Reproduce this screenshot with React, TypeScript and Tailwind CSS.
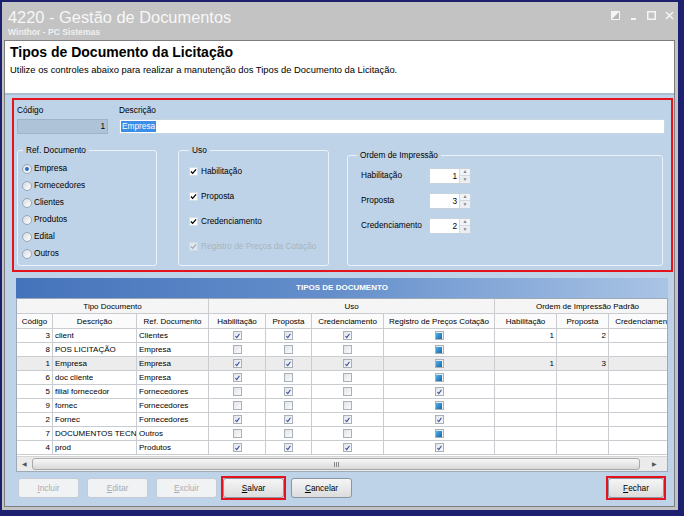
import React from "react";

const F = { fontFamily: '"Liberation Sans", Arial, sans-serif' };

type R = { c: number; d: string; r: string; h: number; p: number; cr: number; rg: number; oh?: string; op?: string; sel?: boolean };

const rows: R[] = [
  { c: 3, d: "client", r: "Clientes", h: 1, p: 1, cr: 1, rg: 2, oh: "1", op: "2" },
  { c: 8, d: "POS LICITAÇÃO", r: "Empresa", h: 0, p: 0, cr: 0, rg: 2 },
  { c: 1, d: "Empresa", r: "Empresa", h: 1, p: 1, cr: 1, rg: 2, oh: "1", op: "3", sel: true },
  { c: 6, d: "doc cliente", r: "Empresa", h: 1, p: 0, cr: 0, rg: 2 },
  { c: 5, d: "filial fornecedor", r: "Fornecedores", h: 0, p: 1, cr: 0, rg: 1 },
  { c: 9, d: "fornec", r: "Fornecedores", h: 0, p: 0, cr: 0, rg: 2 },
  { c: 2, d: "Fornec", r: "Fornecedores", h: 1, p: 1, cr: 1, rg: 1 },
  { c: 7, d: "DOCUMENTOS TECNICOS", r: "Outros", h: 0, p: 0, cr: 0, rg: 2 },
  { c: 4, d: "prod", r: "Produtos", h: 1, p: 1, cr: 1, rg: 1 },
];

function TCheck({ v }: { v: number }) {
  return (
    <span className="w-[9px] h-[9px] border border-[#a9b0b8] bg-gradient-to-br from-[#e2e4e8] to-[#fbfbfb] flex items-center justify-center">
      {v === 1 && (
        <svg viewBox="0 0 9 9" className="w-[8px] h-[8px]">
          <path d="M1.8 4.6 L3.6 6.6 L7 1.8" stroke="#3b4fa8" strokeWidth="1.3" fill="none" />
        </svg>
      )}
      {v === 2 && <span className="w-[6px] h-[6px] bg-gradient-to-br from-[#4fb3e8] to-[#1466a8]" />}
    </span>
  );
}

function Radio({ on, label }: { on?: boolean; label: string }) {
  return (
    <div className="h-[17px] flex items-center gap-[2px]">
      <span className="w-[10px] h-[10px] rounded-full border border-[#9aa6b3] bg-gradient-to-br from-[#d5dbe2] to-white flex items-center justify-center">
        {on && <span className="w-[4px] h-[4px] rounded-full bg-[#2f6fc4]" />}
      </span>
      <span>{label}</span>
    </div>
  );
}

function FCheck({ label, disabled }: { label: string; disabled?: boolean }) {
  return (
    <div className={"h-[25px] flex items-center gap-[3px] " + (disabled ? "text-[#a7b3bf]" : "")}>
      <span className={"w-[9px] h-[9px] flex items-center justify-center border " + (disabled ? "border-[#d0d8e0] bg-[#dfe7ef]" : "border-[#d4dce4] bg-white")}>
        <svg viewBox="0 0 9 9" className="w-[9px] h-[9px]">
          <path d="M1.2 4.6 L3.4 6.9 L7.8 1.8" stroke={disabled ? "#a0aab4" : "#000"} strokeWidth="1.7" fill="none" />
        </svg>
      </span>
      <span>{label}</span>
    </div>
  );
}

function Spin({ label, v }: { label: string; v: string }) {
  return (
    <div className="h-[25px] flex items-center">
      <span className="w-[68px]">{label}</span>
      <div className="w-[42px] h-[16px] flex bg-white border border-[#c6d2de]">
        <span className="flex-1 text-right pr-[2px] leading-[14px]">{v}</span>
        <div className="w-[11px] flex flex-col border-l border-[#d0d8e0]">
          <span className="flex-1 flex items-center justify-center bg-[#f2f4f6] border-b border-[#d0d8e0] text-[5px] leading-none text-[#7a8a9a]">▲</span>
          <span className="flex-1 flex items-center justify-center bg-[#eceff2] text-[5px] leading-none text-[#7a8a9a]">▼</span>
        </div>
      </div>
    </div>
  );
}

function Btn({ label, u, disabled }: { label: string; u: string; disabled?: boolean }) {
  return (
    <button
      className={
        "w-[61px] h-[20px] rounded-[3px] border text-[8.3px] flex items-center justify-center " +
        (disabled
          ? "border-[#c3ccd6] bg-[#f1f2f3] text-[#a8adb3]"
          : "border-[#8a96a3] bg-gradient-to-b from-[#f6f6f6] to-[#dcdcdc] text-black")
      }
      style={F}
    >
      <span className="underline">{u}</span>
      {label.slice(1)}
    </button>
  );
}

const cell = "h-[14px] border-r border-b border-[#c9ccd0] px-[2px] leading-[13px] whitespace-nowrap overflow-hidden flex items-center";

export default function App() {
  return (
    <div className="w-[684px] h-[516px] bg-[#1c206e] pt-[2px] pl-[2px] pr-[6px] pb-[6px]" style={F}>
      <div className="w-full h-full bg-[#c3c3c3] flex flex-col pl-[2px] pr-[3px] pb-[3px]">
        {/* title bar */}
        <div className="h-[38px] flex justify-between pl-[4px] pt-[6px]">
          <div className="flex flex-col">
            <span className="text-[16.4px] leading-[18px] text-[#f7f7f7]">4220 - Gestão de Documentos</span>
            <span className="text-[8.6px] leading-[12px] font-bold text-[#f0f0f0]">Winthor - PC Sistemas</span>
          </div>
          <div className="flex items-start gap-[9px] pt-[3px] pr-[1px]">
            <svg viewBox="0 0 9 9" className="w-[9px] h-[9px]">
              <rect x="0.5" y="0.5" width="8" height="8" fill="#b5b5b5" stroke="#f4f4f4" />
              <polygon points="0.5,0.5 8.5,0.5 0.5,8.5" fill="#f4f4f4" />
            </svg>
            <svg viewBox="0 0 9 9" className="w-[9px] h-[9px]">
              <rect x="2" y="7" width="5" height="2" fill="#f4f4f4" />
            </svg>
            <svg viewBox="0 0 9 9" className="w-[9px] h-[9px]">
              <rect x="0.75" y="0.75" width="7.5" height="7.5" fill="none" stroke="#f4f4f4" strokeWidth="1.5" />
            </svg>
            <svg viewBox="0 0 9 9" className="w-[9px] h-[9px]">
              <path d="M1 1 L8 8 M8 1 L1 8" stroke="#f4f4f4" strokeWidth="1.6" />
            </svg>
          </div>
        </div>

        {/* content */}
        <div className="flex-1 flex flex-col border border-[#7d7d7d] bg-[#bfd3e8]">
          <div className="h-[54px] bg-white border-b-2 border-[#a9bdd3] pl-[5px] pt-[3px]">
            <div className="text-[14px] leading-[17px] font-bold text-black">Tipos de Documento da Licitação</div>
            <div className="text-[9.4px] leading-[12px] mt-[3px] text-black">
              Utilize os controles abaixo para realizar a manutenção dos Tipos de Documento da Licitação.
            </div>
          </div>

          <div className="flex-1 flex flex-col text-[8.3px] text-black">
            {/* red form box */}
            <div className="mt-[3px] ml-[7px] mr-[1px] h-[174px] border-2 border-[#e3141b] pt-[4px] pl-[3px] pr-[6px] pb-[4px] flex flex-col">
              <div className="flex gap-[11px] leading-[12px]">
                <div className="w-[91px] flex flex-col">
                  <span>Código</span>
                  <div className="mt-[3px] h-[15px] bg-[#aec3d8] border border-[#9fb3c8] text-right pr-[2px] leading-[13px]">1</div>
                </div>
                <div className="flex-1 flex flex-col">
                  <span>Descrição</span>
                  <div className="mt-[3px] h-[15px] bg-white border border-[#c8d6e4] pl-[1px] flex items-center">
                    <span className="bg-[#3a8ee6] text-white leading-[11px] px-[1px]">Empresa</span>
                  </div>
                </div>
              </div>

              <div className="flex mt-[10px] flex-1">
                <fieldset className="w-[140px] border border-[#edf2f8] rounded-[3px] p-0 m-0 min-w-0">
                  <legend className="ml-[5px] px-[3px] leading-[12px]">Ref. Documento</legend>
                  <div className="pl-[4px] pt-[4px]">
                    <Radio on label="Empresa" />
                    <Radio label="Fornecedores" />
                    <Radio label="Clientes" />
                    <Radio label="Produtos" />
                    <Radio label="Edital" />
                    <Radio label="Outros" />
                  </div>
                </fieldset>
                <fieldset className="ml-[21px] w-[151px] border border-[#edf2f8] rounded-[3px] p-0 m-0 min-w-0">
                  <legend className="ml-[10px] px-[3px] leading-[12px]">Uso</legend>
                  <div className="pl-[10px] pt-[3px]">
                    <FCheck label="Habilitação" />
                    <FCheck label="Proposta" />
                    <FCheck label="Credenciamento" />
                    <FCheck label="Registro de Preços da Cotação" disabled />
                  </div>
                </fieldset>
                <fieldset className="ml-[18px] mt-[5px] w-[316px] border border-[#edf2f8] rounded-[3px] p-0 m-0 min-w-0">
                  <legend className="ml-[9px] px-[3px] leading-[12px]">Ordem de Impressão</legend>
                  <div className="pl-[13px] pt-[2px]">
                    <Spin label="Habilitação" v="1" />
                    <Spin label="Proposta" v="3" />
                    <Spin label="Credenciamento" v="2" />
                  </div>
                </fieldset>
              </div>
            </div>

            {/* table panel */}
            <div className="mt-[6px] ml-[11px] mr-[6px] flex flex-col">
              <div className="h-[20px] bg-gradient-to-r from-[#4573bb] via-[#6690cc] to-[#aac4e5] flex items-center justify-center text-white font-bold text-[8px]">
                TIPOS DE DOCUMENTO
              </div>
              <div className="overflow-hidden bg-white border border-[#9eaab6] text-[8px]">
                <div className="grid w-[664px] grid-cols-[36px_84px_72px_57px_46px_72px_111px_62px_52px_72px]">
                  <div className={cell + " col-span-3 justify-center h-[15px] bg-[#f5f5f5]"}>Tipo Documento</div>
                  <div className={cell + " col-span-4 justify-center h-[15px] bg-[#f5f5f5]"}>Uso</div>
                  <div className={cell + " col-span-3 justify-center h-[15px] bg-[#f5f5f5]"}>Ordem de Impressão Padrão</div>
                  {["Código", "Descrição", "Ref. Documento", "Habilitação", "Proposta", "Credenciamento", "Registro de Preços Cotação", "Habilitação", "Proposta", "Credenciamento"].map((h, i) => (
                    <div key={i} className={cell + " h-[15px] justify-center bg-[#fbfbfb]"}>{h}</div>
                  ))}
                  {rows.map((r, i) => {
                    const bg = r.sel ? " bg-[#ececec]" : "";
                    return (
                      <React.Fragment key={i}>
                        <div className={cell + " justify-end" + bg}>{r.c}</div>
                        <div className={cell + bg}>{r.d}</div>
                        <div className={cell + bg}>{r.r}</div>
                        <div className={cell + " justify-center" + bg}><TCheck v={r.h} /></div>
                        <div className={cell + " justify-center" + bg}><TCheck v={r.p} /></div>
                        <div className={cell + " justify-center" + bg}><TCheck v={r.cr} /></div>
                        <div className={cell + " justify-center" + bg}><TCheck v={r.rg} /></div>
                        <div className={cell + " justify-end" + bg}>{r.oh ?? ""}</div>
                        <div className={cell + " justify-end" + bg}>{r.op ?? ""}</div>
                        <div className={cell + bg}></div>
                      </React.Fragment>
                    );
                  })}
                </div>
                {/* scrollbar */}
                <div className="h-[15px] mt-[1px] flex items-center bg-[#ebebeb] border-t border-[#d6d6d6]">
                  <span className="w-[14px] h-full flex items-center justify-center text-[6px] text-[#555]">◀</span>
                  <div className="flex-1 h-[12px] mx-[1px] rounded-[3px] border border-[#a9a9a9] bg-gradient-to-b from-[#f7f7f7] to-[#d9d9d9] flex items-center justify-center">
                    <span className="flex gap-[1px]">
                      <span className="w-[1px] h-[5px] bg-[#888]" />
                      <span className="w-[1px] h-[5px] bg-[#888]" />
                      <span className="w-[1px] h-[5px] bg-[#888]" />
                    </span>
                  </div>
                  <span className="w-[26px] h-full flex items-center justify-center text-[6px] text-[#555]">▶</span>
                </div>
              </div>
            </div>

            {/* buttons */}
            <div className="mt-[4px] ml-[13px] mr-[8px] flex items-center">
              <Btn label="Incluir" u="I" disabled />
              <div className="ml-[8px]"><Btn label="Editar" u="E" disabled /></div>
              <div className="ml-[8px]"><Btn label="Excluir" u="E" disabled /></div>
              <div className="ml-[4px] border-2 border-[#e3141b]"><Btn label="Salvar" u="S" /></div>
              <div className="ml-[5px]"><Btn label="Cancelar" u="C" /></div>
              <div className="ml-auto border-2 border-[#e3141b]">
                <button className="w-[56px] h-[20px] rounded-[3px] border border-[#8a96a3] bg-gradient-to-b from-[#f6f6f6] to-[#dcdcdc] text-[8.3px] flex items-center justify-center" style={F}>
                  <span className="underline">F</span>echar
                </button>
              </div>
            </div>
          </div>
        </div>
      </div>
    </div>
  );
}
